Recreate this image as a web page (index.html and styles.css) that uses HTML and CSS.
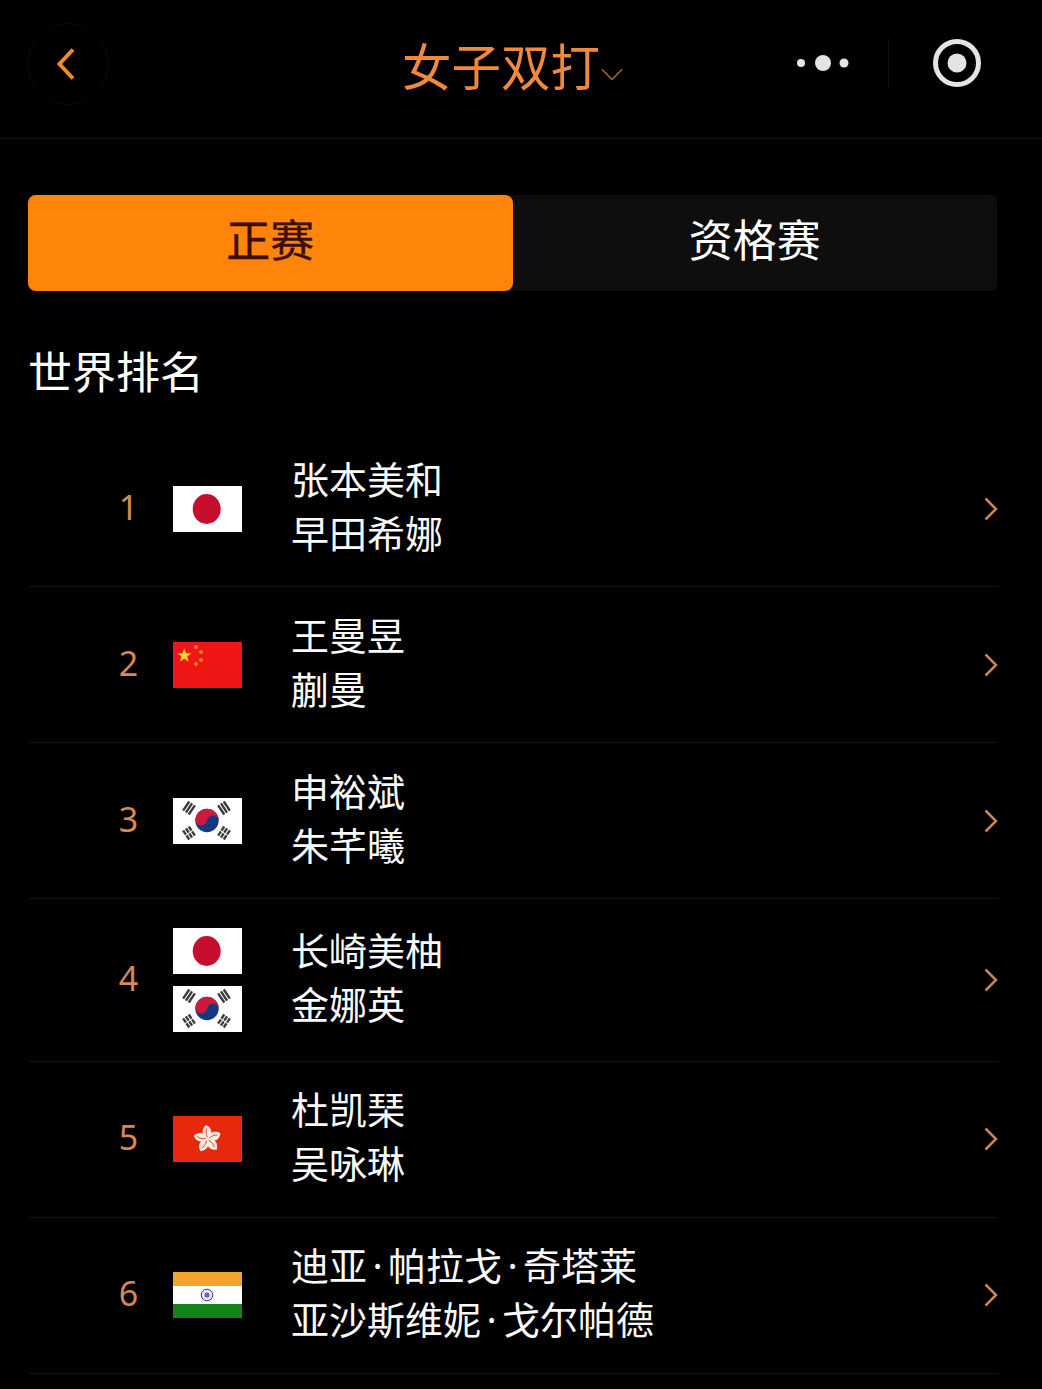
FILE: index.html
```html
<!DOCTYPE html>
<html lang="zh-CN">
<head>
  <meta charset="UTF-8">
  <meta name="viewport" content="width=device-width, initial-scale=1.0">
  <title>女子双打</title>
  <link rel="stylesheet" href="styles.css">
</head>
<body>
  <svg class="defs" width="0" height="0" aria-hidden="true">
    <symbol id="flag-jp" viewBox="0 0 69 46">
      <rect width="69" height="46" fill="#fff"/>
      <ellipse cx="33.7" cy="23" rx="14" ry="15" fill="#c60f2e"/>
    </symbol>
    <symbol id="flag-cn" viewBox="0 0 69 46">
      <rect width="69" height="46" fill="#f01616"/>
      <polygon points="11.300,6 13.100,11.200 18.500,11.300 14.200,14.600 15.700,19.800 11.300,16.700 6.900,19.800 8.400,14.600 4.100,11.300 9.500,11.200" fill="#fbd12a"/>
      <circle cx="23" cy="5" r="1.900" fill="#e88a2a"/>
      <circle cx="28" cy="10" r="1.900" fill="#e88a2a"/>
      <circle cx="28" cy="18" r="1.900" fill="#e88a2a"/>
      <circle cx="23" cy="22" r="1.900" fill="#e88a2a"/>
    </symbol>
    <symbol id="flag-kr" viewBox="0 0 69 46">
      <rect width="69" height="46" fill="#fff"/>
      <circle cx="34" cy="22.500" r="11.700" fill="#15397f"/>
      <path d="M22.300 22.500A11.700 11.700 0 0 1 45.700 22.500 5.850 5.850 0 0 0 34 22.500 5.850 5.850 0 0 1 22.300 22.500z" fill="#cd1a3c" transform="rotate(8 34 22.500)"/>
      <g fill="#3c3c3c">
        <g transform="rotate(-56 16 10)"><rect x="10.500" y="5.400" width="11" height="2.400"/><rect x="10.500" y="8.800" width="11" height="2.400"/><rect x="10.500" y="12.200" width="11" height="2.400"/></g>
        <g transform="rotate(56 51 10)"><rect x="45.500" y="5.400" width="11" height="2.400"/><rect x="45.500" y="8.800" width="11" height="2.400"/><rect x="45.500" y="12.200" width="11" height="2.400"/></g>
        <g transform="rotate(56 16 35)"><rect x="10.500" y="30.400" width="11" height="2.400"/><rect x="10.500" y="33.800" width="11" height="2.400"/><rect x="10.500" y="37.200" width="11" height="2.400"/><rect x="15.500" y="30" width="1" height="10" fill="#fff"/></g>
        <g transform="rotate(-56 51 35)"><rect x="45.500" y="30.400" width="11" height="2.400"/><rect x="45.500" y="33.800" width="11" height="2.400"/><rect x="45.500" y="37.200" width="11" height="2.400"/><rect x="50.500" y="30" width="1" height="10" fill="#fff"/></g>
      </g>
    </symbol>
    <symbol id="flag-hk" viewBox="0 0 69 46">
      <rect width="69" height="46" fill="#e6290c"/>
      <g id="petal-one">
        <path d="M34.500 23C28.500 20 28 13.500 33 9c6 2.500 7.500 9.500 1.500 14z" fill="#fbeae2"/>
        <path d="M34.300 21c-1.500-3-1.500-6-.5-8.500" fill="none" stroke="#e6290c" stroke-width=".8"/>
      </g>
      <use href="#petal-one" transform="rotate(72 34.500 23)"/>
      <use href="#petal-one" transform="rotate(144 34.500 23)"/>
      <use href="#petal-one" transform="rotate(216 34.500 23)"/>
      <use href="#petal-one" transform="rotate(288 34.500 23)"/>
    </symbol>
    <symbol id="flag-in" viewBox="0 0 69 46">
      <rect width="69" height="14" fill="#f6a02e"/>
      <rect y="14" width="69" height="18" fill="#fff"/>
      <rect y="32" width="69" height="14" fill="#13831c"/>
      <circle cx="34" cy="23" r="5.800" fill="#e6e6f4" stroke="#3c3a8c" stroke-width="1"/>
      <circle cx="34" cy="23" r="2.600" fill="#6a68ac"/>
    </symbol>
  </svg>

  <header class="topbar">
    <button class="back" aria-label="返回">
      <svg width="20" height="34" viewBox="0 0 20 34"><path d="M17 2.500 3.500 17 17 31.500" fill="none" stroke="#f08a24" stroke-width="4"/></svg>
    </button>
    <h1 class="title">女子双打<svg class="title-arrow" width="22" height="13" viewBox="0 0 22 13"><path d="M1 1.500 11 11.500 21 1.500" fill="none" stroke="#a8683a" stroke-width="1.500"/></svg></h1>
    <div class="capsule">
      <svg width="54" height="18" viewBox="0 0 54 18"><circle cx="5" cy="9" r="4" fill="#e4e4e4"/><circle cx="27" cy="9" r="8" fill="#e4e4e4"/><circle cx="48" cy="9" r="4.500" fill="#e4e4e4"/></svg>
      <span class="capsule-line"></span>
      <svg width="50" height="50" viewBox="0 0 50 50"><circle cx="25" cy="25" r="21.500" fill="none" stroke="#e4e4e4" stroke-width="5"/><circle cx="25" cy="25" r="9.500" fill="#e4e4e4"/></svg>
    </div>
  </header>

  <div class="tabs">
    <div class="tab active">正赛</div>
    <div class="tab">资格赛</div>
  </div>

  <h2 class="section-title">世界排名</h2>

  <ul class="ranking">
    <li class="row">
      <span class="rank">1</span>
      <div class="flags"><svg class="flag"><use href="#flag-jp"/></svg></div>
      <div class="names"><div>张本美和</div><div>早田希娜</div></div>
      <svg class="arrow" width="14" height="24" viewBox="0 0 14 24"><path d="M1.500 1.500 12 12 1.500 22.500"/></svg>
    </li>
    <li class="row">
      <span class="rank">2</span>
      <div class="flags"><svg class="flag"><use href="#flag-cn"/></svg></div>
      <div class="names"><div>王曼昱</div><div>蒯曼</div></div>
      <svg class="arrow" width="14" height="24" viewBox="0 0 14 24"><path d="M1.500 1.500 12 12 1.500 22.500"/></svg>
    </li>
    <li class="row">
      <span class="rank">3</span>
      <div class="flags"><svg class="flag"><use href="#flag-kr"/></svg></div>
      <div class="names"><div>申裕斌</div><div>朱芊曦</div></div>
      <svg class="arrow" width="14" height="24" viewBox="0 0 14 24"><path d="M1.500 1.500 12 12 1.500 22.500"/></svg>
    </li>
    <li class="row row-pair">
      <span class="rank">4</span>
      <div class="flags"><svg class="flag"><use href="#flag-jp"/></svg><svg class="flag"><use href="#flag-kr"/></svg></div>
      <div class="names"><div>长崎美柚</div><div>金娜英</div></div>
      <svg class="arrow" width="14" height="24" viewBox="0 0 14 24"><path d="M1.500 1.500 12 12 1.500 22.500"/></svg>
    </li>
    <li class="row row-up">
      <span class="rank">5</span>
      <div class="flags"><svg class="flag"><use href="#flag-hk"/></svg></div>
      <div class="names"><div>杜凯琹</div><div>吴咏琳</div></div>
      <svg class="arrow" width="14" height="24" viewBox="0 0 14 24"><path d="M1.500 1.500 12 12 1.500 22.500"/></svg>
    </li>
    <li class="row row-up">
      <span class="rank">6</span>
      <div class="flags"><svg class="flag"><use href="#flag-in"/></svg></div>
      <div class="names"><div>迪亚<span class="dot">·</span>帕拉戈<span class="dot">·</span>奇塔莱</div><div>亚沙斯维妮<span class="dot">·</span>戈尔帕德</div></div>
      <svg class="arrow" width="14" height="24" viewBox="0 0 14 24"><path d="M1.500 1.500 12 12 1.500 22.500"/></svg>
    </li>
  </ul>
</body>
</html>
```

FILE: styles.css
```css
/* General */
body {
  margin: 0;
  height: 1389px;
  overflow: hidden;
  background: #000;
  color: #fff;
  font-family: "Noto Sans CJK SC", "Noto Sans", sans-serif;
}
.defs {
  display: block;
  height: 0;
}

/* Top bar */
.topbar {
  display: flex;
  align-items: center;
  height: 139px;
  padding: 0 60px 13px 27px;
  box-sizing: border-box;
  border-bottom: 1px solid #151515;
}
.back {
  display: flex;
  align-items: center;
  justify-content: center;
  width: 82px;
  height: 82px;
  margin-top: 2px;
  padding: 0 4px 0 0;
  background: none;
  border: 1px solid #0c0c0c;
  border-radius: 50%;
}
.title {
  display: flex;
  margin: 4px 0 0 293px;
  color: #ef8a3c;
  font-size: 49.5px;
  font-weight: 400;
  line-height: 64px;
}
.title-arrow {
  margin: 35px 0 0 1px;
}
.capsule {
  display: flex;
  align-items: center;
  margin-left: auto;
}
.capsule-line {
  width: 1px;
  height: 48px;
  margin: 0 43px 0 38px;
  background: #111;
}

/* Tabs */
.tabs {
  display: flex;
  width: 969px;
  height: 96px;
  margin: 56px 0 0 28px;
  background: #0e0e0e;
  border-radius: 6px;
}
.tab {
  flex: 1;
  display: flex;
  align-items: center;
  justify-content: center;
  padding-bottom: 10px;
  box-sizing: border-box;
  font-size: 44px;
  line-height: 76px;
}
.tab.active {
  background: #ff8409;
  color: #3a0f00;
  border-radius: 8px;
  -webkit-text-stroke: 0.4px #3a0f00;
}

/* Ranking */
.section-title {
  margin: 48px 0 0 28px;
  font-size: 44px;
  font-weight: 400;
  line-height: 62px;
}
.ranking {
  list-style: none;
  width: 967px;
  margin: 30px 0 0 30px;
  padding: 0;
}
.row {
  display: flex;
  align-items: center;
  padding: 28px 0 27px;
  border-bottom: 1px solid #151515;
}
.row-pair {
  padding: 29px 0;
}
.row-up {
  padding: 27px 0 28px;
}
.rank {
  width: 197px;
  margin: 0 -54px 5px 0;
  text-align: center;
  color: #d58a55;
  font-family: "Noto Sans", sans-serif;
  font-size: 34px;
}
.flags {
  display: flex;
  flex-direction: column;
  gap: 12px;
  width: 118px;
}
.flag {
  display: block;
  width: 69px;
  height: 46px;
}
.names {
  flex: 1;
  margin-top: -8px;
  font-size: 38px;
  line-height: 54px;
  color: #fafafa;
}
.dot {
  display: inline-block;
  width: 21px;
  line-height: 1;
  text-align: center;
  font-family: "Noto Sans", sans-serif;
}
.arrow {
  margin-right: -1px;
  fill: none;
  stroke: #c9874f;
  stroke-width: 2.500;
}
```
